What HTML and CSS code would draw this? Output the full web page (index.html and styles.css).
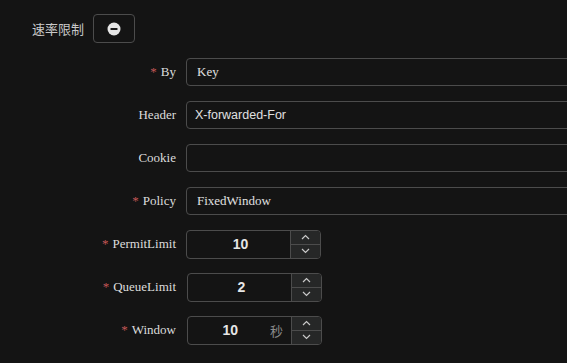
FILE: index.html
```html
<!DOCTYPE html>
<html lang="zh">
<head>
    <meta charset="UTF-8">
    <meta name="viewport" content="width=device-width, initial-scale=1.0">
    <title>速率限制</title>
    <link rel="stylesheet" href="styles.css">
</head>
<body>

<div class="section">
    <!-- Section header -->
    <div class="section-head">
        <span class="section-title">速率限制</span>
        <button class="remove-button" type="button">
            <svg width="14" height="14" viewBox="0 0 14 14">
                <circle cx="7" cy="7" r="6.5" fill="#e6e6e6"/>
                <rect x="3.5" y="6" width="7" height="2" rx="0.5" fill="#1a1a1a"/>
            </svg>
        </button>
    </div>

    <!-- Form rows -->
    <form class="form">
        <div class="form-row">
            <label class="form-label required">By</label>
            <input class="text-input serif" type="text" value="Key">
        </div>
        <div class="form-row">
            <label class="form-label">Header</label>
            <input class="text-input sans" type="text" value="X-forwarded-For">
        </div>
        <div class="form-row">
            <label class="form-label">Cookie</label>
            <input class="text-input" type="text" value="">
        </div>
        <div class="form-row">
            <label class="form-label required">Policy</label>
            <input class="text-input serif" type="text" value="FixedWindow">
        </div>
        <div class="form-row">
            <label class="form-label required">PermitLimit</label>
            <div class="number-input">
                <div class="number-value">10</div>
                <div class="spinner">
                    <span class="spin-btn"><svg width="9" height="6" viewBox="0 0 9 6"><path d="M1 5 L4.5 1.5 L8 5" fill="none" stroke="#c8c8c8" stroke-width="1.2"/></svg></span>
                    <span class="spin-btn"><svg width="9" height="6" viewBox="0 0 9 6"><path d="M1 1 L4.5 4.5 L8 1" fill="none" stroke="#c8c8c8" stroke-width="1.2"/></svg></span>
                </div>
            </div>
        </div>
        <div class="form-row">
            <label class="form-label required">QueueLimit</label>
            <div class="number-input shifted">
                <div class="number-value">2</div>
                <div class="spinner">
                    <span class="spin-btn"><svg width="9" height="6" viewBox="0 0 9 6"><path d="M1 5 L4.5 1.5 L8 5" fill="none" stroke="#c8c8c8" stroke-width="1.2"/></svg></span>
                    <span class="spin-btn"><svg width="9" height="6" viewBox="0 0 9 6"><path d="M1 1 L4.5 4.5 L8 1" fill="none" stroke="#c8c8c8" stroke-width="1.2"/></svg></span>
                </div>
            </div>
        </div>
        <div class="form-row">
            <label class="form-label required">Window</label>
            <div class="number-input shifted">
                <div class="number-value with-unit">10</div>
                <span class="unit">秒</span>
                <div class="spinner">
                    <span class="spin-btn"><svg width="9" height="6" viewBox="0 0 9 6"><path d="M1 5 L4.5 1.5 L8 5" fill="none" stroke="#c8c8c8" stroke-width="1.2"/></svg></span>
                    <span class="spin-btn"><svg width="9" height="6" viewBox="0 0 9 6"><path d="M1 1 L4.5 4.5 L8 1" fill="none" stroke="#c8c8c8" stroke-width="1.2"/></svg></span>
                </div>
            </div>
        </div>
    </form>
</div>

</body>
</html>
```

FILE: styles.css
```css
html, body {
    margin: 0;
    padding: 0;
    background-color: #141414;
    overflow: hidden;
}

body {
    color: #dcdcdc;
    font-family: "Liberation Serif", serif;
    font-size: 13px;
}

.section {
    padding-top: 14px;
}

.section-head {
    display: flex;
    align-items: center;
    padding-left: 32px;
    height: 29px;
}

.section-title {
    font-family: "Noto Sans CJK SC", sans-serif;
    font-size: 13px;
    color: #c8c8c8;
    margin-right: 9px;
}

.remove-button {
    width: 42px;
    height: 29px;
    background-color: #141414;
    border: 1px solid #4c4c4c;
    border-radius: 4px;
    display: flex;
    align-items: center;
    justify-content: center;
    padding: 0;
    cursor: pointer;
}

.form {
    margin-top: 15px;
}

.form-row {
    display: flex;
    align-items: center;
    height: 28px;
    margin-bottom: 15px;
}

.form-label {
    width: 186px;
    box-sizing: border-box;
    text-align: right;
    padding-right: 10px;
    font-size: 13px;
    color: #dcdcdc;
    flex-shrink: 0;
}

.form-label.required::before {
    content: "*";
    color: #c45656;
    margin-right: 4px;
}

.text-input {
    width: 400px;
    height: 28px;
    box-sizing: border-box;
    background-color: #141414;
    border: 1px solid #4c4c4c;
    border-radius: 4px;
    color: #e0e0e0;
    padding: 0 10px;
    flex-shrink: 0;
    outline: none;
}

.serif {
    font-family: "Liberation Serif", serif;
    font-size: 13px;
}

.sans {
    font-family: "Liberation Sans", sans-serif;
    font-size: 12.5px;
    padding-left: 8px;
}

.number-input {
    display: flex;
    width: 135px;
    height: 29px;
    box-sizing: border-box;
    border: 1px solid #4c4c4c;
    border-radius: 4px;
    overflow: hidden;
    flex-shrink: 0;
}

.number-input.shifted {
    margin-left: 1px;
}

.number-value {
    flex: 1;
    display: flex;
    align-items: center;
    justify-content: center;
    font-family: "Liberation Sans", sans-serif;
    font-size: 14px;
    font-weight: bold;
    color: #e6e6e6;
    padding-left: 4px;
}

.number-value.with-unit {
    padding-left: 0;
    justify-content: flex-end;
    flex: 0 0 50px;
}

.unit {
    flex: 1;
    display: flex;
    align-items: center;
    justify-content: flex-end;
    padding-right: 8px;
    font-family: "Noto Sans CJK SC", sans-serif;
    font-size: 13px;
    color: #8a8a8a;
}

.spinner {
    width: 29px;
    display: flex;
    flex-direction: column;
    border-left: 1px solid #4c4c4c;
    background-color: #262727;
}

.spin-btn {
    flex: 1;
    display: flex;
    align-items: center;
    justify-content: center;
}

.spin-btn:first-child {
    border-bottom: 1px solid #4c4c4c;
}
```
